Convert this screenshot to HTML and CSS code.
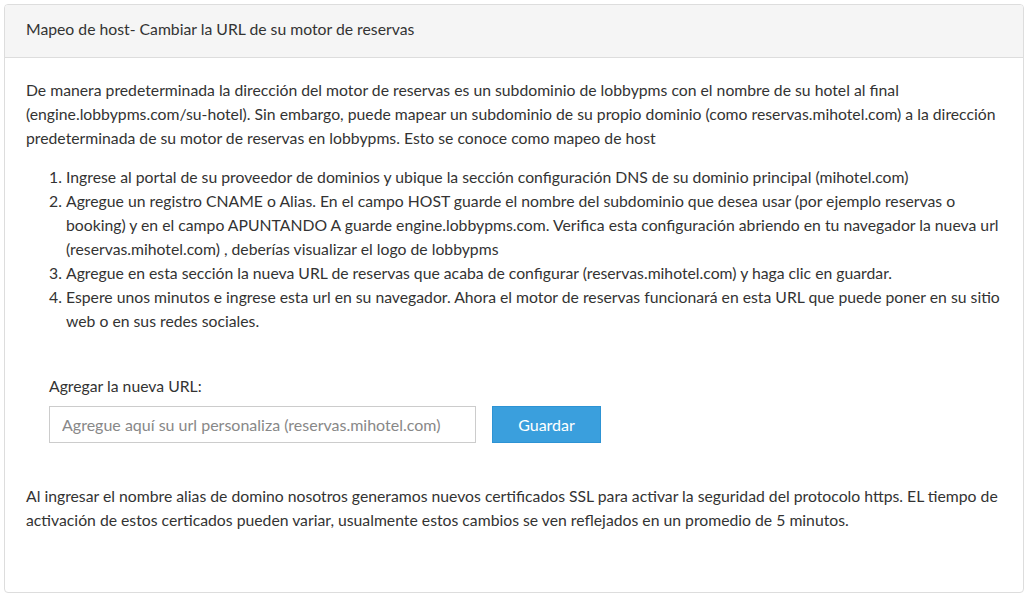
FILE: index.html
```html
<!DOCTYPE html>
<html lang="es">

<head>
    <meta charset="utf-8">
    <link rel="stylesheet" href="styles.css">
    <title>Mapeo de host</title>
</head>

<body>
    <div class="panel">
        <div class="panel-heading">Mapeo de host- Cambiar la URL de su motor de reservas</div>
        <div class="panel-body">
            <p class="intro">De manera predeterminada la dirección del motor de reservas es un subdominio de lobbypms con el nombre de su hotel al final (engine.lobbypms.com/su-hotel). Sin embargo, puede mapear un subdominio de su propio dominio (como reservas.mihotel.com) a la dirección predeterminada de su motor de reservas en lobbypms. Esto se conoce como mapeo de host</p>
            <ol class="pasos">
                <li>Ingrese al portal de su proveedor de dominios y ubique la sección configuración DNS de su dominio principal (mihotel.com)</li>
                <li>Agregue un registro CNAME o Alias. En el campo HOST guarde el nombre del subdominio que desea usar (por ejemplo reservas o booking) y en el campo APUNTANDO A guarde engine.lobbypms.com. Verifica esta configuración abriendo en tu navegador la nueva url (reservas.mihotel.com) , deberías visualizar el logo de lobbypms</li>
                <li>Agregue en esta sección la nueva URL de reservas que acaba de configurar (reservas.mihotel.com) y haga clic en guardar.</li>
                <li>Espere unos minutos e ingrese esta url en su navegador. Ahora el motor de reservas funcionará en esta URL que puede poner en su sitio web o en sus redes sociales.</li>
            </ol>
            <form class="form-url">
                <label class="form-label" for="url">Agregar la nueva URL:</label>
                <div class="form-row">
                    <input class="form-input" id="url" type="text" placeholder="Agregue aquí su url personaliza (reservas.mihotel.com)">
                    <button class="btn-guardar" type="button">Guardar</button>
                </div>
            </form>
            <p class="nota">Al ingresar el nombre alias de domino nosotros generamos nuevos certificados SSL para activar la seguridad del protocolo https. EL tiempo de activación de estos certicados pueden variar, usualmente estos cambios se ven reflejados en un promedio de 5 minutos.</p>
        </div>
    </div>
</body>

</html>
```

FILE: styles.css
```css
* {
    box-sizing: border-box;
    margin: 0;
    padding: 0;
}

body {
    padding: 4px 5px 2px 4px;
    font-family: Lato, "Open Sans", sans-serif;
    font-size: 15.75px;
    line-height: 24px;
    color: #333;
    background: #fff;
}

.panel {
    border: 1px solid #ddd;
    border-radius: 4px;
    height: 589px;
    overflow: hidden;
}

.panel-heading {
    background-color: #f5f5f5;
    border-bottom: 1px solid #ddd;
    padding: 10px 21px 15px;
    height: 53px;
    line-height: 27px;
}

.panel-body {
    padding: 20px 21px;
}

.pasos {
    margin-top: 15px;
    padding-left: 40px;
}

.form-url {
    margin-top: 41px;
    padding-left: 23px;
}

.form-label {
    display: block;
    margin-bottom: 8px;
}

.form-row {
    display: flex;
    gap: 16px;
}

.form-input {
    width: 427px;
    height: 37px;
    border: 1px solid #ccc;
    padding: 0 12px;
    font-family: inherit;
    font-size: 16px;
    color: #333;
}

.form-input::placeholder {
    color: #888;
}

.btn-guardar {
    width: 109px;
    height: 37px;
    border: 1px solid #2d93d4;
    background-color: #3a9fdd;
    color: #fff;
    font-family: inherit;
    font-size: 16px;
    cursor: pointer;
}

.nota {
    margin-top: 41px;
}
```
